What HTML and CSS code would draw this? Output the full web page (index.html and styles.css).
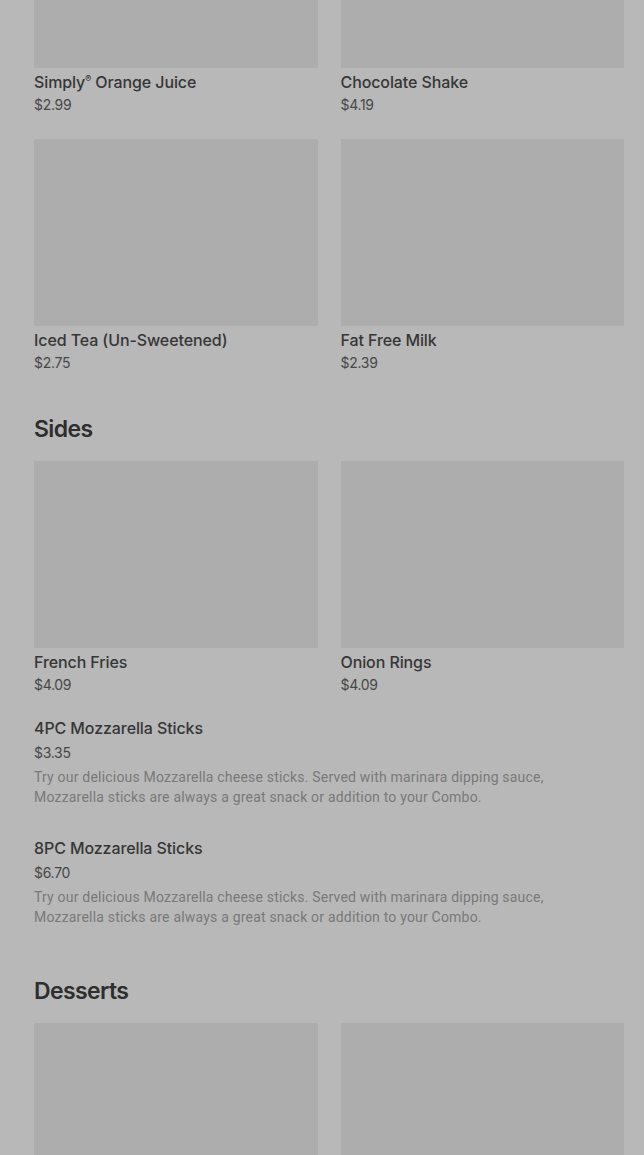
FILE: index.html
```html
<!DOCTYPE html>
<html lang="en">
<head>
<meta charset="utf-8">
<title>Menu</title>
<link rel="stylesheet" href="styles.css">
</head>
<body>
<div class="menu">

	<section class="category first">
		<div class="grid">
			<div class="card">
				<div class="photo"></div>
				<div class="name">Simply<sup>®</sup> Orange Juice</div>
				<div class="price">$2.99</div>
			</div>
			<div class="card">
				<div class="photo"></div>
				<div class="name">Chocolate Shake</div>
				<div class="price">$4.19</div>
			</div>
			<div class="card">
				<div class="photo"></div>
				<div class="name">Iced Tea (Un-Sweetened)</div>
				<div class="price">$2.75</div>
			</div>
			<div class="card">
				<div class="photo"></div>
				<div class="name">Fat Free Milk</div>
				<div class="price">$2.39</div>
			</div>
		</div>
	</section>

	<section class="category">
		<h2>Sides</h2>
		<div class="grid">
			<div class="card">
				<div class="photo"></div>
				<div class="name">French Fries</div>
				<div class="price">$4.09</div>
			</div>
			<div class="card">
				<div class="photo"></div>
				<div class="name">Onion Rings</div>
				<div class="price">$4.09</div>
			</div>
		</div>
		<div class="item">
			<div class="name">4PC Mozzarella Sticks</div>
			<div class="price">$3.35</div>
			<div class="desc">Try our delicious Mozzarella cheese sticks. Served with marinara dipping sauce, Mozzarella sticks are always a great snack or addition to your Combo.</div>
		</div>
		<div class="item">
			<div class="name">8PC Mozzarella Sticks</div>
			<div class="price">$6.70</div>
			<div class="desc">Try our delicious Mozzarella cheese sticks. Served with marinara dipping sauce, Mozzarella sticks are always a great snack or addition to your Combo.</div>
		</div>
	</section>

	<section class="category">
		<h2>Desserts</h2>
		<div class="grid">
			<div class="card">
				<div class="photo"></div>
			</div>
			<div class="card">
				<div class="photo"></div>
			</div>
		</div>
	</section>

</div>
</body>
</html>
```

FILE: styles.css
```css
body {
	margin: 0;
	background: #b8b8b8;
	font-family: Inter, "Liberation Sans", sans-serif;
	color: #333333;
	overflow: hidden;
}

.menu {
	padding: 0 20px 0 34px;
}

.category {
	padding-top: 40px;
}

.category.first {
	padding-top: 0;
	margin-top: -119px;
}

.category h2 {
	margin: 0 0 16px 0;
	font-size: 23px;
	line-height: 32px;
	font-weight: 600;
	letter-spacing: -0.6px;
	color: #2e2e2e;
}

.grid {
	display: grid;
	grid-template-columns: 1fr 1fr;
	column-gap: 23px;
	row-gap: 24px;
}

.card .photo {
	height: 187px;
	background: #adadad;
	margin-bottom: 4px;
}

.name {
	font-size: 16px;
	line-height: 20px;
	font-weight: 500;
	letter-spacing: -0.1px;
	color: #363636;
}

.name sup {
	font-size: 9px;
	line-height: 0;
	vertical-align: 6px;
}

.price {
	margin-top: 3px;
	font-size: 14px;
	line-height: 20px;
	letter-spacing: -0.3px;
	color: #474747;
}

.item {
	margin-top: 23px;
	padding-right: 60px;
}

.item + .item {
	margin-top: 31px;
}

.item .price {
	margin-top: 5px;
}

.item .desc {
	margin-top: 4px;
	font-family: Roboto, "Liberation Sans", sans-serif;
	font-size: 14px;
	line-height: 20px;
	letter-spacing: 0.2px;
	color: #797979;
}

.category:last-child h2 {
	margin-top: 8px;
}
```
